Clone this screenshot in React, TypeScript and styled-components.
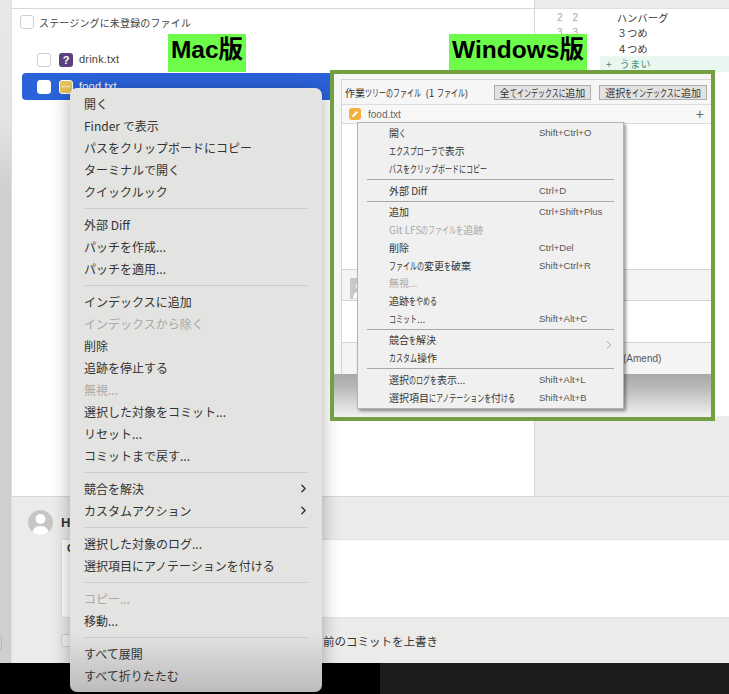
import React from 'react';
import styled, { createGlobalStyle } from 'styled-components';
import { ChevronRight } from 'lucide-react';

type MenuEntry = { label: string; shortcut?: string; disabled?: boolean; submenu?: boolean };

const macMenu: MenuEntry[][] = [
    [{ label: '開く' }, { label: 'Finder で表示' }, { label: 'パスをクリップボードにコピー' }, { label: 'ターミナルで開く' }, { label: 'クイックルック' }],
    [{ label: '外部 Diff' }, { label: 'パッチを作成...' }, { label: 'パッチを適用...' }],
    [
        { label: 'インデックスに追加' },
        { label: 'インデックスから除く', disabled: true },
        { label: '削除' },
        { label: '追跡を停止する' },
        { label: '無視...', disabled: true },
        { label: '選択した対象をコミット...' },
        { label: 'リセット...' },
        { label: 'コミットまで戻す...' },
    ],
    [{ label: '競合を解決', submenu: true }, { label: 'カスタムアクション', submenu: true }],
    [{ label: '選択した対象のログ...' }, { label: '選択項目にアノテーションを付ける' }],
    [{ label: 'コピー...', disabled: true }, { label: '移動...' }],
    [{ label: 'すべて展開' }, { label: 'すべて折りたたむ' }],
];

const winMenu: MenuEntry[][] = [
    [{ label: '開く', shortcut: 'Shift+Ctrl+O' }, { label: 'エクスプローラで表示' }, { label: 'パスをクリップボードにコピー' }],
    [{ label: '外部 Diff', shortcut: 'Ctrl+D' }],
    [
        { label: '追加', shortcut: 'Ctrl+Shift+Plus' },
        { label: 'Git LFSのファイルを追跡', disabled: true },
        { label: '削除', shortcut: 'Ctrl+Del' },
        { label: 'ファイルの変更を破棄', shortcut: 'Shift+Ctrl+R' },
        { label: '無視...', disabled: true },
        { label: '追跡をやめる' },
        { label: 'コミット...', shortcut: 'Shift+Alt+C' },
    ],
    [{ label: '競合を解決', submenu: true }, { label: 'カスタム操作' }],
    [{ label: '選択のログを表示...', shortcut: 'Shift+Alt+L' }, { label: '選択項目にアノテーションを付ける', shortcut: 'Shift+Alt+B' }],
];

// line 4's numbers are behind the Windows label in the picture, so they stay empty
const diffLines = [
    { num: '2', text: 'ハンバーグ' },
    { num: '3', text: '３つめ' },
    { num: '', text: '４つめ' },
];

const Person = () => (
    <svg width="100%" height="100%" viewBox="0 0 25 25">
        <circle cx="12.5" cy="9" r="5" fill="#fff" />
        <path d="M4 25c0-6 3.500-9 8.500-9s8.500 3 8.500 9z" fill="#fff" />
    </svg>
);

const Pencil = () => (
    <svg width="8" height="8" viewBox="0 0 8 8">
        <path d="M1 7l.5-2L5.500 1 7 2.500 3 6.500z" fill="#fff" />
    </svg>
);

// the Windows UI font has narrow kana next to full width kanji
const WinText = ({ text }: { text: string }) => (
    <>
        {text.split(/([\u3040-\u30ff]+)/).map((part, i) =>
            i % 2 === 1 ? <Kana key={i} $count={part.length}>{part}</Kana> : <span key={i}>{part}</span>
        )}
    </>
);

const App = () => {
    return (
        <Page>
            <GlobalStyle />
            <Body>
                <Sidebar>
                    <SidebarButton />
                </Sidebar>
                <Content>
                    <Workspace>
                        <Main>
                            <TopStrip />
                            <SectionRow>
                                <CheckBox />
                                <SectionTitle>ステージングに未登録のファイル</SectionTitle>
                            </SectionRow>
                            <FileRow>
                                <CheckBox />
                                <StatusIcon $color="#5b4180">?</StatusIcon>
                                <FileName>drink.txt</FileName>
                            </FileRow>
                            <FileRow $selected>
                                <CheckBox $filled />
                                <StatusIcon $color="#e9c25a" $outlined>···</StatusIcon>
                                <FileName $selected>food.txt</FileName>
                            </FileRow>
                        </Main>
                        <Diff>
                            <DiffHeader />
                            <DiffBody>
                                {diffLines.map((line) => (
                                    <DiffLine key={line.text}>
                                        <LineNumbers>
                                            <span>{line.num}</span>
                                            <span>{line.num}</span>
                                        </LineNumbers>
                                        <DiffText>{line.text}</DiffText>
                                    </DiffLine>
                                ))}
                                <DiffLine>
                                    <LineNumbers />
                                    <AddedText>
                                        <span>+</span>
                                        <span>うまい</span>
                                    </AddedText>
                                </DiffLine>
                            </DiffBody>
                            <DiffEmpty />
                        </Diff>
                    </Workspace>

                    <Commit>
                        <Author>
                            <Avatar><Person /></Avatar>
                            <AuthorName>H</AuthorName>
                        </Author>
                        <MessageBox>C</MessageBox>
                        <CommitOptions>
                            <OptionBox />
                            <OptionText>前のコミットを上書き</OptionText>
                        </CommitOptions>
                    </Commit>
                </Content>
            </Body>

            <Footer>
                <FooterDark />
            </Footer>

            <Label $left={168} $width={78}>Mac版</Label>
            <Label $left={449} $width={138}>Windows版</Label>

            <MacMenu>
                {macMenu.map((group, i) => (
                    <MacGroup key={i}>
                        {group.map((item) => (
                            <MacItem key={item.label} $disabled={item.disabled}>
                                {item.label}
                                {item.submenu && <MacArrow><ChevronRight size={13} strokeWidth={2.6} color="#333" /></MacArrow>}
                            </MacItem>
                        ))}
                    </MacGroup>
                ))}
            </MacMenu>

            <WindowsFrame>
                <WinPanel>
                    <WinHeader>
                        <WinTitle><WinText text={'作業ツリーのファイル\u00a0\u00a0(1 ファイル)'} /></WinTitle>
                        <WinButton><WinText text="全てインデックスに追加" /></WinButton>
                        <WinButton><WinText text="選択をインデックスに追加" /></WinButton>
                    </WinHeader>
                    <WinFileRow>
                        <WinStatus><Pencil /></WinStatus>
                        <WinFileName>food.txt</WinFileName>
                        <WinPlus>+</WinPlus>
                    </WinFileRow>
                    <WinFileList />
                    <WinAuthorRow>
                        <WinAvatar><Person /></WinAvatar>
                    </WinAuthorRow>
                    <WinMessage />
                    <WinOptions>(Amend)</WinOptions>
                </WinPanel>
                <WinFade />
                <WinMenu>
                    {winMenu.map((group, i) => (
                        <WinGroup key={i}>
                            {group.map((item) => (
                                <WinItem key={item.label} $disabled={item.disabled}>
                                    <WinItemLabel><WinText text={item.label} /></WinItemLabel>
                                    {item.shortcut && <WinShortcut>{item.shortcut}</WinShortcut>}
                                    {item.submenu && (
                                        <WinArrow>
                                            <ChevronRight size={14} strokeWidth={1} color="#777" />
                                        </WinArrow>
                                    )}
                                </WinItem>
                            ))}
                        </WinGroup>
                    ))}
                </WinMenu>
            </WindowsFrame>
        </Page>
    );
};

const GlobalStyle = createGlobalStyle`
    html, body {
        margin: 0;
        padding: 0;
        background: #000;
        overflow: hidden;
    }
    * {
        box-sizing: border-box;
    }
`;

const jpFont = `"Noto Sans CJK JP", "Liberation Sans", sans-serif`;
const latinFont = `"Liberation Sans", "Noto Sans CJK JP", sans-serif`;

const Page = styled.div`
    position: relative;
    display: flex;
    flex-direction: column;
    width: 729px;
    height: 694px;
    overflow: hidden;
    font-family: ${latinFont};
    color: #333;
`;

const Body = styled.div`
    display: flex;
    height: 663px;
`;

const Sidebar = styled.div`
    display: flex;
    flex-direction: column;
    justify-content: flex-end;
    width: 12px;
    padding-bottom: 13px;
    background: linear-gradient(#e8e8e6 0, #e4e4e2 120px, #cfcfcd 190px, #cfcfcd 100%);
    border-right: 1px solid #dedede;
`;

const SidebarButton = styled.div`
    width: 2px;
    height: 14px;
    border: 1px solid #b9b9b9;
    border-left: none;
`;

const Content = styled.div`
    flex: 1;
    display: flex;
    flex-direction: column;
`;

const Workspace = styled.div`
    display: flex;
    height: 497px;
    border-bottom: 1px solid #d6d6d6;
`;

const Main = styled.div`
    width: 522px;
    background: #fff;
    display: flex;
    flex-direction: column;
`;

const TopStrip = styled.div`
    height: 9px;
    border-bottom: 1px solid #d8d8d8;
`;

const SectionRow = styled.div`
    display: flex;
    align-items: center;
    gap: 5px;
    height: 26px;
    padding-left: 8px;
    margin-bottom: 11px;
`;

const CheckBox = styled.span<{ $filled?: boolean }>`
    width: 14px;
    height: 14px;
    flex: none;
    border-radius: 3px;
    background: #fff;
    border: 1px solid ${(p) => (p.$filled ? '#fff' : '#cfcfcf')};
`;

const SectionTitle = styled.span`
    font-family: ${jpFont};
    font-size: 10px;
    letter-spacing: 0.15px;
    color: #444;
`;

const FileRow = styled.div<{ $selected?: boolean }>`
    display: flex;
    align-items: center;
    height: 27px;
    margin-left: 10px;
    padding-left: 15px;
    border-radius: 4px 0 0 4px;
    background: ${(p) => (p.$selected ? '#2a62d9' : 'transparent')};
`;

const StatusIcon = styled.span<{ $color: string; $outlined?: boolean }>`
    display: flex;
    align-items: center;
    justify-content: center;
    width: 14px;
    height: 14px;
    margin-left: 8px;
    border-radius: 3px;
    background: ${(p) => p.$color};
    border: ${(p) => (p.$outlined ? '1px solid #fff' : 'none')};
    color: #fff;
    font-size: ${(p) => (p.$outlined ? '9px' : '11px')};
    font-weight: 700;
`;

const FileName = styled.span<{ $selected?: boolean }>`
    margin: 0 0 2px 6px;
    font-size: 11px;
    letter-spacing: 0.2px;
    color: ${(p) => (p.$selected ? '#fff' : '#444')};
`;

const Diff = styled.div`
    flex: 1;
    display: flex;
    flex-direction: column;
    border-left: 1px solid #d6d6d6;
    background: #fff;
`;

const DiffHeader = styled.div`
    height: 9px;
    background: #ebebe9;
    border-bottom: 1px solid #e0e0e0;
`;

const DiffBody = styled.div`
    height: 407px;
    padding-top: 1px;
`;

const DiffEmpty = styled.div`
    flex: 1;
    background: #ebebe9;
`;

const DiffLine = styled.div`
    display: flex;
    height: 15.4px;
    font-family: ${jpFont};
    font-size: 10px;
    line-height: 15.4px;
`;

const LineNumbers = styled.div`
    display: flex;
    justify-content: flex-end;
    gap: 10px;
    width: 49px;
    padding-right: 6px;
    color: #aaa;
    font-family: ${latinFont};
`;

const DiffText = styled.span`
    margin-left: 33px;
    letter-spacing: 0.3px;
    color: #333;
`;

const AddedText = styled.div`
    flex: 1;
    display: flex;
    gap: 8px;
    margin-left: 16px;
    padding-left: 6px;
    background: #e8f7ef;
    color: #3f8f6e;
    letter-spacing: 0.3px;
`;

const Commit = styled.div`
    flex: 1;
    background: #ebebe9;
    display: flex;
    flex-direction: column;
`;

const Author = styled.div`
    display: flex;
    align-items: center;
    gap: 8px;
    height: 42px;
    padding: 9px 0 0 16px;
`;

const Avatar = styled.div`
    width: 25px;
    height: 25px;
    border-radius: 50%;
    overflow: hidden;
    background: #c6c6c6;
`;

const AuthorName = styled.span`
    font-size: 13px;
    font-weight: 700;
`;

const MessageBox = styled.div`
    height: 79px;
    margin-left: 49px;
    padding: 2px 5px;
    background: #fff;
    border: 1px solid #e2e2e2;
    border-right: none;
    font-size: 11px;
    font-weight: 700;
`;

const CommitOptions = styled.div`
    display: flex;
    align-items: center;
    flex: 1;
    padding-left: 49px;
`;

const OptionBox = styled.span`
    width: 14px;
    height: 13px;
    border: 1px solid #cfcfcf;
    border-radius: 3px;
    background: #f4f4f4;
`;

const OptionText = styled.span`
    margin-left: 248px;
    font-family: ${jpFont};
    font-size: 11.500px;
    color: #333;
`;

const Footer = styled.div`
    flex: 1;
    display: flex;
    justify-content: flex-end;
    background: #000;
`;

const FooterDark = styled.div`
    width: 349px;
    background: #1c1c1c;
`;

const Label = styled.div<{ $left: number; $width: number }>`
    position: absolute;
    top: 34px;
    left: ${(p) => p.$left}px;
    width: ${(p) => p.$width}px;
    height: 38px;
    padding-bottom: 12px;
    display: flex;
    align-items: center;
    justify-content: center;
    background: #6efc4a;
    color: #000;
    font-family: ${latinFont};
    font-size: 24.500px;
    font-weight: 700;
    white-space: nowrap;
`;

const MacMenu = styled.div`
    position: absolute;
    top: 88px;
    left: 70px;
    width: 252px;
    height: 604px;
    padding: 5px 14px;
    border-radius: 7px;
    background: linear-gradient(#e3e3e1 0, #e3e3e1 545px, #bdbbbc 100%);
    box-shadow: 0 3px 18px rgba(0, 0, 0, 0.32);
`;

const MacGroup = styled.div`
    & + & {
        margin-top: 11px;
        position: relative;
    }
    & + &::before {
        content: '';
        position: absolute;
        top: -6px;
        left: 0;
        right: 0;
        height: 1px;
        background: #cbcbc9;
    }
`;

const MacItem = styled.div<{ $disabled?: boolean }>`
    display: flex;
    align-items: center;
    justify-content: space-between;
    height: 22px;
    padding-bottom: 2px;
    font-family: ${jpFont};
    font-size: 12px;
    color: ${(p) => (p.$disabled ? '#a9a9a9' : '#333')};
`;

const MacArrow = styled.span`
    display: flex;
    margin-right: -2px;
`;

const WindowsFrame = styled.div`
    position: absolute;
    top: 70px;
    left: 330px;
    width: 385px;
    height: 351px;
    border: 4px solid #739e42;
    background: #f5f5f5;
    display: flex;
    flex-direction: column;
    font-family: ${jpFont};
`;

const Kana = styled.span<{ $count: number }>`
    display: inline-block;
    transform: scaleX(0.7);
    transform-origin: left center;
    margin-right: ${(p) => p.$count * -3}px;
`;

const WinPanel = styled.div`
    height: 295px;
    margin: 5px 0 0 7px;
    background: #fff;
    border-top: 1px solid #d4d4d4;
    border-left: 1px solid #d4d4d4;
    display: flex;
    flex-direction: column;
`;

const WinHeader = styled.div`
    display: flex;
    align-items: center;
    gap: 8px;
    height: 24px;
    padding: 0 4px 0 3px;
    background: #f6f6f6;
`;

const WinTitle = styled.span`
    flex: 1;
    font-size: 10px;
    color: #333;
    white-space: nowrap;
`;

const WinButton = styled.span`
    height: 15px;
    padding: 0 5px;
    display: flex;
    align-items: center;
    background: #e2e2e2;
    border: 1px solid #adadad;
    font-size: 10px;
    color: #333;
    white-space: nowrap;
`;

const WinFileRow = styled.div`
    display: flex;
    align-items: center;
    height: 20px;
    padding-left: 7px;
    background: #f8f8f8;
    border-top: 1px solid #dcdcdc;
    border-bottom: 1px solid #dcdcdc;
`;

const WinStatus = styled.span`
    display: flex;
    align-items: center;
    justify-content: center;
    width: 12px;
    height: 12px;
    border-radius: 3px;
    background: #f5b040;
`;

const WinFileName = styled.span`
    flex: 1;
    margin-left: 7px;
    font-family: ${latinFont};
    font-size: 10px;
    color: #666;
`;

const WinPlus = styled.span`
    margin-right: 7px;
    font-family: ${latinFont};
    font-size: 14px;
    color: #666;
`;

const WinFileList = styled.div`
    height: 146px;
    border-bottom: 1px solid #d4d4d4;
`;

const WinAuthorRow = styled.div`
    height: 31px;
    padding: 8px 0 0 8px;
    background: #f4f4f4;
    border-bottom: 1px solid #d4d4d4;
`;

const WinAvatar = styled.div`
    width: 20px;
    height: 21px;
    background: #c8c8c8;
    overflow: hidden;
`;

const WinMessage = styled.div`
    height: 42px;
    border-bottom: 1px solid #d4d4d4;
`;

const WinOptions = styled.div`
    flex: 1;
    display: flex;
    align-items: center;
    padding-left: 281px;
    background: #f4f4f4;
    font-family: ${latinFont};
    font-size: 10px;
    color: #555;
`;

const WinFade = styled.div`
    flex: 1;
    background: linear-gradient(#a9a9a9, #b8b8b8 30%, #f2f2f2);
`;

const WinMenu = styled.div`
    position: absolute;
    top: 48px;
    left: 23px;
    width: 267px;
    height: 287px;
    padding: 1px 9px 0;
    background: #f0f0f0;
    border: 1px solid #b4b4b4;
    box-shadow: 2px 2px 3px rgba(0, 0, 0, 0.4);
`;

const WinGroup = styled.div`
    & + & {
        margin-top: 1.600px;
        padding-top: 1.600px;
        border-top: 1px solid #a8a8a8;
    }
`;

const WinItem = styled.div<{ $disabled?: boolean }>`
    position: relative;
    display: flex;
    align-items: center;
    height: 17.700px;
    padding-left: 22px;
    color: ${(p) => (p.$disabled ? '#a8a8a8' : '#333')};
`;

const WinItemLabel = styled.span`
    width: 150px;
    font-size: 10px;
    white-space: nowrap;
`;

const WinShortcut = styled.span`
    font-family: ${latinFont};
    font-size: 9.500px;
    color: #555;
    white-space: nowrap;
`;

const WinArrow = styled.span`
    position: absolute;
    right: -2px;
    top: 2px;
`;

export default App;
